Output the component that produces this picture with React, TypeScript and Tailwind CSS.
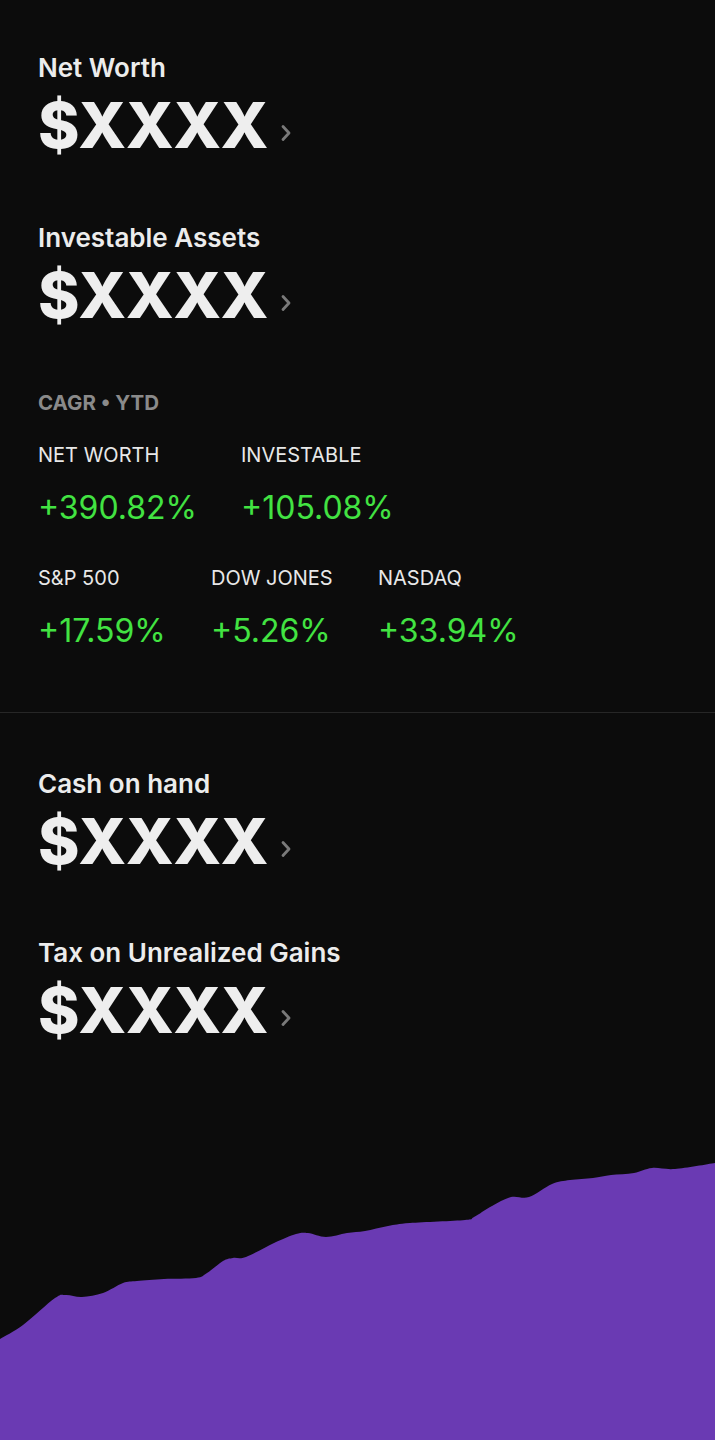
import React from "react";

const pts: [number, number][] = [
  [0, 1339], [23, 1325], [55, 1298], [66, 1295], [82, 1297], [103, 1293], [123, 1283], [137, 1281],
  [164, 1279], [196, 1278], [207, 1273], [223, 1261], [233, 1258], [246, 1257], [274, 1243], [296, 1234],
  [308, 1233], [326, 1237], [347, 1233], [365, 1231], [388, 1226], [410, 1223], [465, 1220], [474, 1217],
  [492, 1206], [511, 1197], [529, 1197], [552, 1184], [570, 1180], [593, 1178], [611, 1175], [634, 1173],
  [652, 1168], [675, 1169], [715, 1163],
];

function smoothPath(p: [number, number][], off: number) {
  const q = p.map(([x, y]) => [x, y - off] as [number, number]);
  let d = `M${q[0][0]},${q[0][1]}`;
  for (let i = 0; i < q.length - 1; i++) {
    const p0 = q[i - 1] || q[i];
    const p1 = q[i];
    const p2 = q[i + 1];
    const p3 = q[i + 2] || p2;
    const c1x = p1[0] + (p2[0] - p0[0]) / 6;
    const c1y = p1[1] + (p2[1] - p0[1]) / 6;
    const c2x = p2[0] - (p3[0] - p1[0]) / 6;
    const c2y = p2[1] - (p3[1] - p1[1]) / 6;
    d += ` C${c1x.toFixed(1)},${c1y.toFixed(1)} ${c2x.toFixed(1)},${c2y.toFixed(1)} ${p2[0]},${p2[1]}`;
  }
  return d;
}

function Chevron() {
  return (
    <svg width="14" height="20" viewBox="0 0 14 20" className="ml-[11px] mt-[16px]">
      <path d="M4 3.5 L10 10 L4 16.5" fill="none" stroke="#7a7a7a" strokeWidth="2.8" strokeLinecap="round" strokeLinejoin="round" />
    </svg>
  );
}

function Block({ label, className = "" }: { label: string; className?: string }) {
  return (
    <div className={className}>
      <div className="text-[26px] leading-[30px] font-semibold text-[#ececec]">{label}</div>
      <div className="mt-[6px] flex items-center h-[72px]">
        <span className="text-[63px] leading-[72px] font-extrabold text-[#eeeeee] tracking-[-0.5px]">$XXXX</span>
        <Chevron />
      </div>
    </div>
  );
}

function Stat({ label, value, w }: { label: string; value: string; w: string }) {
  return (
    <div className={w}>
      <div className="text-[20px] leading-[24px] text-[#e8e8e8]">{label}</div>
      <div className="mt-[21px] text-[32px] leading-[40px] text-[#42e342]">{value}</div>
    </div>
  );
}

export default function App() {
  const off = 1150;
  const line = smoothPath(pts, off);
  const area = `${line} L715,290 L0,290 Z`;
  return (
    <div
      className="w-full min-h-[1440px] h-[1440px] bg-[#0c0c0c] flex flex-col overflow-hidden"
      style={{ fontFamily: "Inter, 'Noto Sans', sans-serif" }}
    >
      <div className="pl-[38px] pt-[53px]">
        <Block label="Net Worth" />
        <Block label="Investable Assets" className="mt-[62px]" />
        <div className="mt-[60px] text-[20.5px] leading-[24px] font-bold text-[#8a8a8a]">CAGR • YTD</div>
        <div className="mt-[28px] flex">
          <Stat label="NET WORTH" value="+390.82%" w="w-[203px]" />
          <Stat label="INVESTABLE" value="+105.08%" w="w-[203px]" />
        </div>
        <div className="mt-[38px] flex">
          <Stat label="S&P 500" value="+17.59%" w="w-[173px]" />
          <Stat label="DOW JONES" value="+5.26%" w="w-[167px]" />
          <Stat label="NASDAQ" value="+33.94%" w="w-[167px]" />
        </div>
      </div>
      <div className="mt-[61px] h-px bg-[#272727] w-full" />
      <div className="pl-[38px] pt-[56px]">
        <Block label="Cash on hand" />
        <Block label="Tax on Unrealized Gains" className="mt-[61px]" />
      </div>
      <div className="mt-auto w-full h-[290px]">
        <svg width="715" height="290" viewBox="0 0 715 290" className="block w-full h-full" preserveAspectRatio="none">
          <path d={area} fill="#6a3ab3" />
        </svg>
      </div>
    </div>
  );
}
